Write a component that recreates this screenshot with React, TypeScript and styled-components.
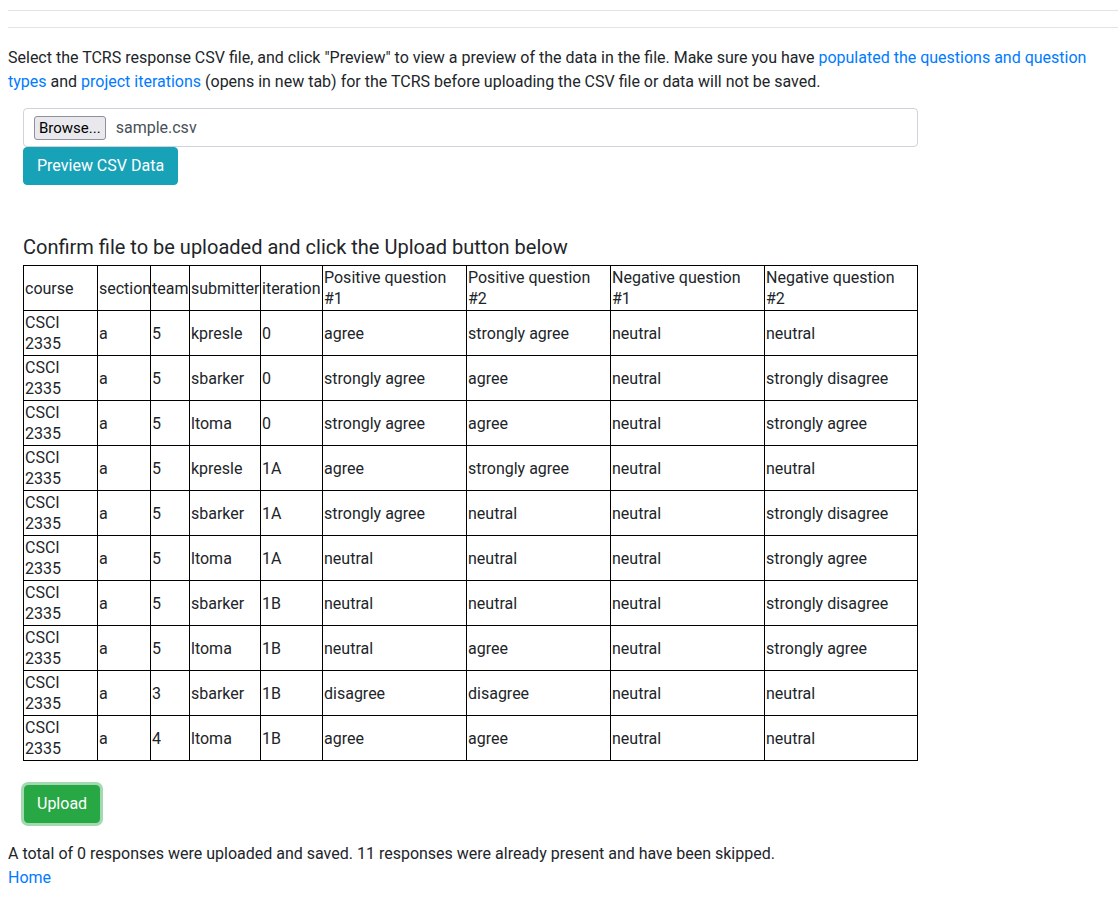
import React from "react";
import styled, { createGlobalStyle } from "styled-components";

const FONT = `Roboto, "Liberation Sans", sans-serif`;

const Global = createGlobalStyle`
  html, body { margin: 0; padding: 0; background: #fff; }
  body {
    font-family: ${FONT};
    font-size: 16px;
    line-height: 24px;
    color: #212529;
  }
  * { box-sizing: border-box; }
`;

const Page = styled.div`
  padding: 0 0 0 8px;
  display: flex;
  flex-direction: column;
`;

const Rule = styled.hr`
  margin: 0;
  border: 0;
  border-top: 1px solid #e3e3e3;
  height: 0;
`;

const RuleStack = styled.div`
  display: flex;
  flex-direction: column;
  gap: 16px;
  padding-top: 10px;
`;

const Intro = styled.p`
  margin: 18px 8px 0 0;
  max-width: 1102px;
`;

const Link = styled.a`
  color: #007bff;
  text-decoration: none;
`;

const Panel = styled.div`
  padding: 14px 0 0 15px;
  display: flex;
  flex-direction: column;
  width: 910px;
`;

const FileBox = styled.div`
  height: 39px;
  border: 1px solid #ced4da;
  border-radius: 4px;
  display: flex;
  align-items: center;
  padding: 0 10px;
  gap: 10px;
  color: #495057;
`;

const BrowseButton = styled.span`
  font-family: ${FONT};
  font-size: 15px;
  line-height: 20px;
  height: 24px;
  padding: 1px 4px;
  border: 1px solid #8f8f9d;
  border-radius: 3px;
  background: #e9e9ed;
  color: #000;
`;

const Button = styled.button<{ $variant: "info" | "success"; $focus?: boolean }>`
  font-family: ${FONT};
  font-size: 16px;
  line-height: 24px;
  color: #fff;
  border: 1px solid ${(p) => (p.$variant === "info" ? "#17a2b8" : "#28a745")};
  background: ${(p) => (p.$variant === "info" ? "#17a2b8" : "#28a745")};
  border-radius: 4px;
  padding: 6px 12px;
  align-self: flex-start;
  cursor: pointer;
  box-shadow: ${(p) => (p.$focus ? "0 0 0 3px rgba(72,180,97,.5)" : "none")};
`;

const PreviewButton = styled(Button)`
  padding: 6px 13px;
`;

const Heading = styled.h5`
  font-size: 20px;
  font-weight: 400;
  line-height: 24px;
  margin: 50px 0 6px 0;
`;

const Table = styled.table`
  border-collapse: collapse;
  table-layout: fixed;
  width: 894px;
  line-height: 21px;
`;

const Cell = styled.td`
  border: 1px solid #000;
  padding: 1px;
  vertical-align: middle;
  text-align: left;
  height: 45px;
  overflow: hidden;
`;

const HeadCell = styled(Cell).attrs({ as: "th" })`
  font-weight: 400;
`;

const UploadWrap = styled.div`
  padding: 24px 0 0 1px;
  display: flex;
`;

const Status = styled.div`
  margin-top: 19px;
  display: flex;
  flex-direction: column;
`;

const widths = [74, 53, 39, 71, 62, 144, 144, 154, 153];
const headers = [
  "course",
  "section",
  "team",
  "submitter",
  "iteration",
  "Positive question #1",
  "Positive question #2",
  "Negative question #1",
  "Negative question #2",
];

const rows: string[][] = [
  ["kpresle", "0", "5", "agree", "strongly agree", "neutral", "neutral"],
  ["sbarker", "0", "5", "strongly agree", "agree", "neutral", "strongly disagree"],
  ["ltoma", "0", "5", "strongly agree", "agree", "neutral", "strongly agree"],
  ["kpresle", "1A", "5", "agree", "strongly agree", "neutral", "neutral"],
  ["sbarker", "1A", "5", "strongly agree", "neutral", "neutral", "strongly disagree"],
  ["ltoma", "1A", "5", "neutral", "neutral", "neutral", "strongly agree"],
  ["sbarker", "1B", "5", "neutral", "neutral", "neutral", "strongly disagree"],
  ["ltoma", "1B", "5", "neutral", "agree", "neutral", "strongly agree"],
  ["sbarker", "1B", "3", "disagree", "disagree", "neutral", "neutral"],
  ["ltoma", "1B", "4", "agree", "agree", "neutral", "neutral"],
];

export default function App() {
  return (
    <>
      <Global />
      <Page>
        <RuleStack>
          <Rule />
          <Rule />
        </RuleStack>
        <Intro>
          Select the TCRS response CSV file, and click "Preview" to view a preview of the data in the
          file. Make sure you have <Link href="#">populated the questions and question</Link>{" "}
          <Link href="#">types</Link> and <Link href="#">project iterations</Link> (opens in new tab)
          for the TCRS before uploading the CSV file or data will not be saved.
        </Intro>
        <Panel>
          <FileBox>
            <BrowseButton>Browse...</BrowseButton>
            <span>sample.csv</span>
          </FileBox>
          <PreviewButton $variant="info">Preview CSV Data</PreviewButton>
          <Heading>Confirm file to be uploaded and click the Upload button below</Heading>
          <Table>
            <colgroup>
              {widths.map((w, i) => (
                <col key={i} style={{ width: w }} />
              ))}
            </colgroup>
            <thead>
              <tr>
                {headers.map((h) => (
                  <HeadCell key={h}>{h}</HeadCell>
                ))}
              </tr>
            </thead>
            <tbody>
              {rows.map((r, i) => (
                <tr key={i}>
                  <Cell>CSCI 2335</Cell>
                  <Cell>a</Cell>
                  <Cell>{r[2]}</Cell>
                  <Cell>{r[0]}</Cell>
                  <Cell>{r[1]}</Cell>
                  <Cell>{r[3]}</Cell>
                  <Cell>{r[4]}</Cell>
                  <Cell>{r[5]}</Cell>
                  <Cell>{r[6]}</Cell>
                </tr>
              ))}
            </tbody>
          </Table>
          <UploadWrap>
            <Button $variant="success" $focus>
              Upload
            </Button>
          </UploadWrap>
        </Panel>
        <Status>
          <span>
            A total of 0 responses were uploaded and saved. 11 responses were already present and have
            been skipped.
          </span>
          <Link href="#">Home</Link>
        </Status>
      </Page>
    </>
  );
}
